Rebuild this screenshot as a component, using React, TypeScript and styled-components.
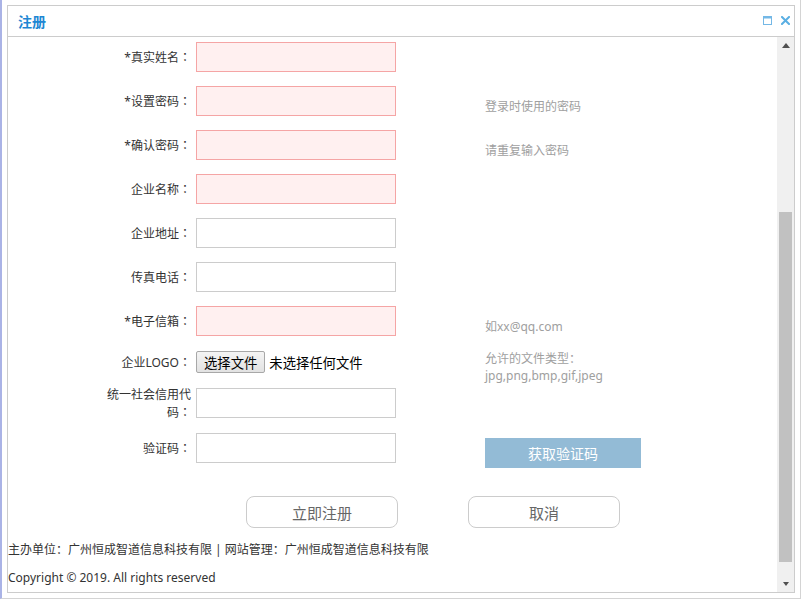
import React from 'react';
import styled, { createGlobalStyle } from 'styled-components';

const GlobalStyle = createGlobalStyle`
  html, body {
    margin: 0;
    padding: 0;
    background: #fff;
  }
  body {
    font-family: "Noto Sans", "Noto Sans CJK SC", sans-serif;
    font-size: 12px;
    color: #333;
  }
  * {
    box-sizing: border-box;
  }
`;

const Frame = styled.div`
  width: 801px;
  height: 599px;
  border-left: 2px solid #aab3e6;
  border-right: 1px solid #d4d4d4;
  border-bottom: 1px solid #d4d4d4;
  padding: 5px;
  background: #fff;
`;

const Panel = styled.div`
  height: 100%;
  border: 1px solid #cccccc;
  display: flex;
  flex-direction: column;
`;

const Header = styled.div`
  flex: none;
  height: 31px;
  border-bottom: 1px solid #cccccc;
  display: flex;
  align-items: center;
  justify-content: space-between;
  padding: 0 4px 0 10px;
`;

const Title = styled.span`
  font-size: 14px;
  font-weight: bold;
  color: #1e87d3;
`;

const Tools = styled.div`
  display: flex;
  align-items: center;
  gap: 9px;
  margin-top: -2px;
`;

const Body = styled.div`
  flex: 1;
  min-height: 0;
  display: flex;
`;

const Content = styled.div`
  flex: 1;
  overflow: hidden;
  padding-top: 5px;
`;

const Scrollbar = styled.div`
  flex: none;
  width: 17px;
  background: #f0f0f0;
  display: flex;
  flex-direction: column;
`;

const Arrow = styled.div`
  flex: none;
  height: 17px;
  display: flex;
  align-items: center;
  justify-content: center;
`;

const Track = styled.div`
  flex: 1;
  padding-top: 158px;
`;

const Thumb = styled.div`
  height: 350px;
  margin: 0 2px;
  background: #c1c1c1;
`;

const Form = styled.div`
  display: grid;
  grid-template-columns: 88px 200px 1fr;
  grid-template-rows: repeat(7, 30px) 24px 31px 30px;
  column-gap: 5px;
  row-gap: 14px;
  margin-left: 95px;
`;

const Label = styled.div`
  align-self: center;
  text-align: right;
  line-height: 17px;
  color: #333;
`;

const Colon = styled.span`
  font-family: "Noto Sans CJK TC", sans-serif;
`;

const TextInput = styled.input<{ $required?: boolean }>`
  width: 200px;
  height: 30px;
  margin: 0;
  padding: 0 4px;
  border: 1px solid ${(p) => (p.$required ? '#f5a5a5' : '#cccccc')};
  background: ${(p) => (p.$required ? '#fff0f0' : '#ffffff')};
  outline: none;
  font: inherit;
`;

const FileField = styled.div`
  display: flex;
  align-items: center;
  gap: 4px;
  white-space: nowrap;
  font-size: 13.33px;
  color: #000;
`;

const FileButton = styled.button`
  height: 22px;
  padding: 0 7px;
  border: 1px solid #a8a8a8;
  border-radius: 2px;
  background: linear-gradient(#f4f4f4, #e2e2e2);
  font: inherit;
  color: #000;
`;

const Hint = styled.div`
  align-self: center;
  padding-top: 10px;
  margin-left: 84px;
  line-height: 17px;
  color: #a0a0a0;
`;

const CodeButton = styled.button`
  width: 156px;
  height: 30px;
  border: none;
  background: #93bbd6;
  color: #fff;
  font-family: inherit;
  font-size: 14px;
`;

const Actions = styled.div`
  display: flex;
  gap: 70px;
  margin-top: 33px;
  padding-left: 238px;
`;

const ActionButton = styled.button`
  width: 152px;
  height: 32px;
  border: 1px solid #cccccc;
  border-radius: 8px;
  background: #fff;
  color: #666;
  font-family: inherit;
  font-size: 15px;
`;

const Footer = styled.div`
  margin-top: 8px;
  line-height: 28px;
  color: #333;
`;

type Field = {
  label: string;
  required?: boolean;
  hint?: string;
};

const fields: Field[] = [
  { label: '*真实姓名', required: true },
  { label: '*设置密码', required: true, hint: '登录时使用的密码' },
  { label: '*确认密码', required: true, hint: '请重复输入密码' },
  { label: '企业名称', required: true },
  { label: '企业地址' },
  { label: '传真电话' },
  { label: '*电子信箱', required: true, hint: '如xx@qq.com' },
];

const MaximizeIcon = () => (
  <svg width="9" height="9" viewBox="0 0 9 9">
    <rect x="0.5" y="0.5" width="8" height="8" fill="none" stroke="#74b8e6" />
    <rect x="0" y="0" width="9" height="2.5" fill="#74b8e6" />
  </svg>
);

const CloseIcon = () => (
  <svg width="9" height="9" viewBox="0 0 9 9">
    <path d="M1 1L8 8M8 1L1 8" stroke="#5aafe3" strokeWidth="2" strokeLinecap="square" />
  </svg>
);

const App: React.FC = () => {
  return (
    <>
      <GlobalStyle />
      <Frame>
        <Panel>
          <Header>
            <Title>注册</Title>
            <Tools>
              <MaximizeIcon />
              <CloseIcon />
            </Tools>
          </Header>
          <Body>
            <Content>
              <Form>
                {fields.map((f) => (
                  <React.Fragment key={f.label}>
                    <Label>
                      {f.label}
                      <Colon>：</Colon>
                    </Label>
                    <TextInput $required={f.required} />
                    <Hint>{f.hint}</Hint>
                  </React.Fragment>
                ))}
                <Label>
                  企业LOGO<Colon>：</Colon>
                </Label>
                <FileField>
                  <FileButton>选择文件</FileButton>
                  <span>未选择任何文件</span>
                </FileField>
                <Hint>
                  允许的文件类型：
                  <br />
                  jpg,png,bmp,gif,jpeg
                </Hint>
                <Label>
                  统一社会信用代码<Colon>：</Colon>
                </Label>
                <TextInput />
                <Hint />
                <Label>
                  验证码<Colon>：</Colon>
                </Label>
                <TextInput />
                <Hint>
                  <CodeButton>获取验证码</CodeButton>
                </Hint>
              </Form>
              <Actions>
                <ActionButton>立即注册</ActionButton>
                <ActionButton>取消</ActionButton>
              </Actions>
              <Footer>
                <div>主办单位：广州恒成智道信息科技有限 | 网站管理：广州恒成智道信息科技有限</div>
                <div>Copyright © 2019. All rights reserved</div>
              </Footer>
            </Content>
            <Scrollbar>
              <Arrow>
                <svg width="8" height="5" viewBox="0 0 8 5">
                  <polygon points="0,5 8,5 4,0" fill="#505050" />
                </svg>
              </Arrow>
              <Track>
                <Thumb />
              </Track>
              <Arrow>
                <svg width="6" height="4" viewBox="0 0 6 4">
                  <polygon points="0,0 6,0 3,4" fill="#505050" />
                </svg>
              </Arrow>
            </Scrollbar>
          </Body>
        </Panel>
      </Frame>
    </>
  );
};

export default App;
